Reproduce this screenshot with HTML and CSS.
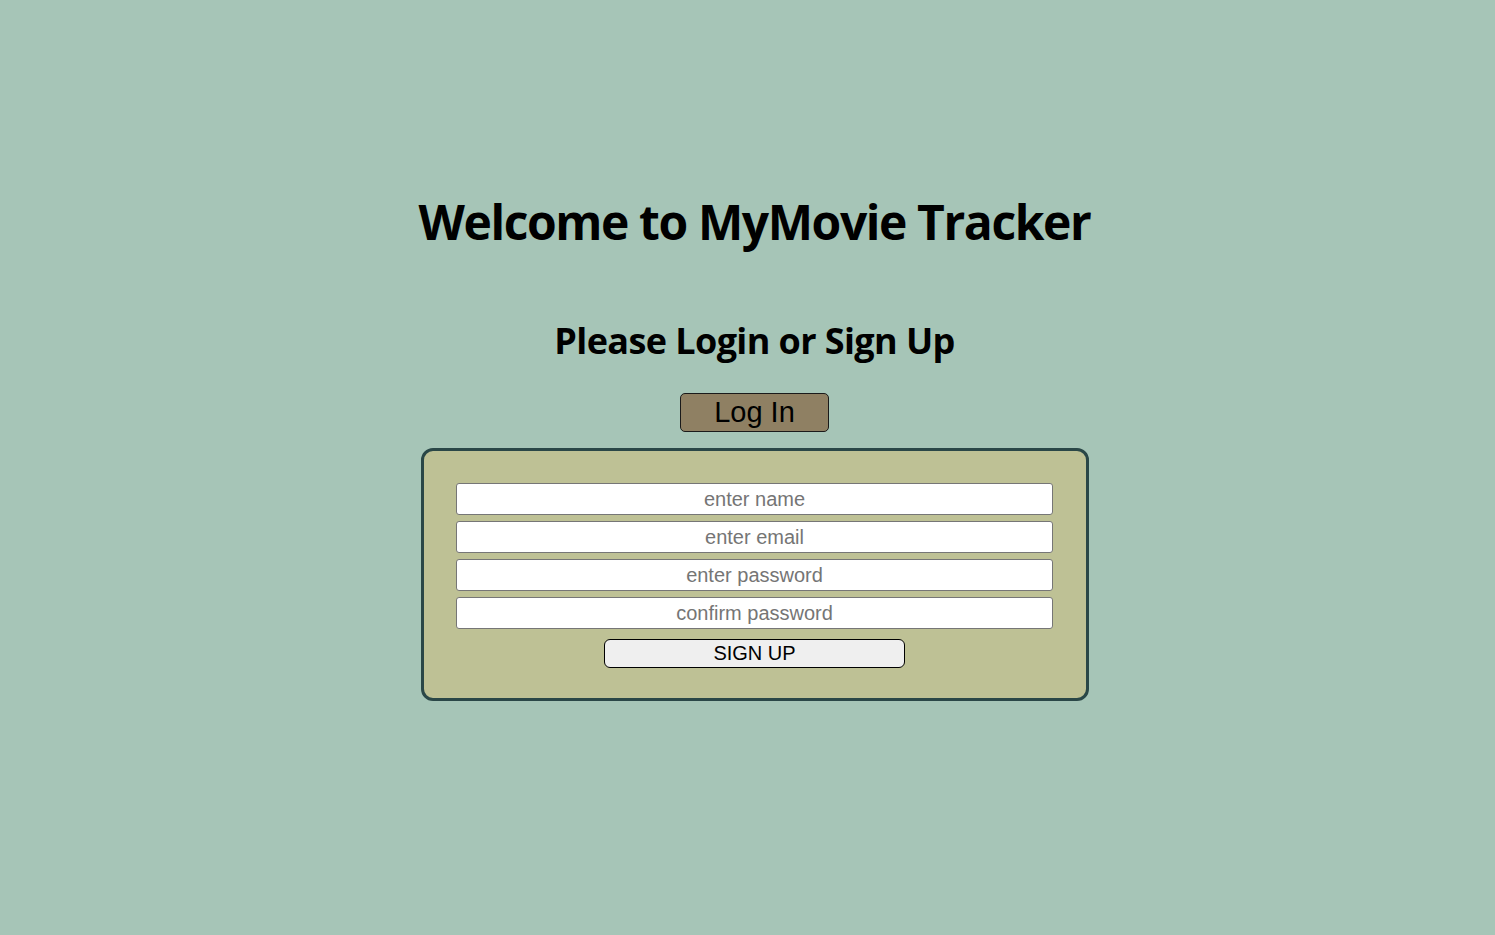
FILE: index.html
```html
<!DOCTYPE html>
<html lang="en">
<head>
<meta charset="utf-8">
<title>MyMovie Tracker</title>
<link rel="stylesheet" href="styles.css">
</head>
<body>
<main class="page">
  <h1 class="title">Welcome to MyMovie Tracker</h1>
  <h2 class="subtitle">Please Login or Sign Up</h2>
  <button class="toggle-btn" type="button">Log In</button>
  <form class="signup-form">
    <input class="field" type="text" placeholder="enter name">
    <input class="field" type="email" placeholder="enter email">
    <input class="field" type="password" placeholder="enter password">
    <input class="field" type="password" placeholder="confirm password">
    <button class="submit-btn" type="button">SIGN UP</button>
  </form>
</main>
</body>
</html>
```
FILE: styles.css
```css
html, body {
  margin: 0;
  padding: 0;
}
body {
  background: #a6c5b7;
  font-family: "Liberation Sans", Arial, sans-serif;
  min-height: 935px;
}
.page {
  display: flex;
  flex-direction: column;
  align-items: center;
  padding-top: 192px;
  padding-left: 14px;
}
.title {
  margin: 0;
  font-family: "Open Sans", "Noto Sans", sans-serif;
  font-weight: 700;
  font-size: 48px;
  line-height: 60px;
  letter-spacing: -1.4px;
  color: #000;
}
.subtitle {
  margin: 67px 0 0;
  font-family: "Open Sans", "Noto Sans", sans-serif;
  font-weight: 700;
  font-size: 36px;
  line-height: 44px;
  letter-spacing: -0.6px;
  color: #000;
}
.toggle-btn {
  margin-top: 30px;
  width: 149px;
  height: 39px;
  padding: 0;
  background: #8f8063;
  border: 1px solid #1a1a1a;
  border-radius: 5px;
  font-family: "Liberation Sans", Arial, sans-serif;
  font-size: 29px;
  color: #000;
}
.signup-form {
  margin-top: 16px;
  box-sizing: border-box;
  width: 668px;
  padding: 32px 32px 30px;
  background: #bec195;
  border: 3px solid #2a4747;
  border-radius: 12px;
  display: flex;
  flex-direction: column;
  align-items: center;
  gap: 6px;
}
.field {
  box-sizing: border-box;
  width: 597px;
  height: 32px;
  margin: 0;
  padding: 0 4px;
  background: #fff;
  border: 1px solid #767676;
  border-radius: 3px;
  font-family: "Liberation Sans", Arial, sans-serif;
  font-size: 20px;
  text-align: center;
}
.field::placeholder {
  color: #757575;
}
.submit-btn {
  margin-top: 4px;
  box-sizing: border-box;
  width: 301px;
  height: 29px;
  padding: 0;
  background: #efefef;
  border: 1px solid #000;
  border-radius: 6px;
  font-family: "Liberation Sans", Arial, sans-serif;
  font-size: 20px;
  color: #000;
}
```
